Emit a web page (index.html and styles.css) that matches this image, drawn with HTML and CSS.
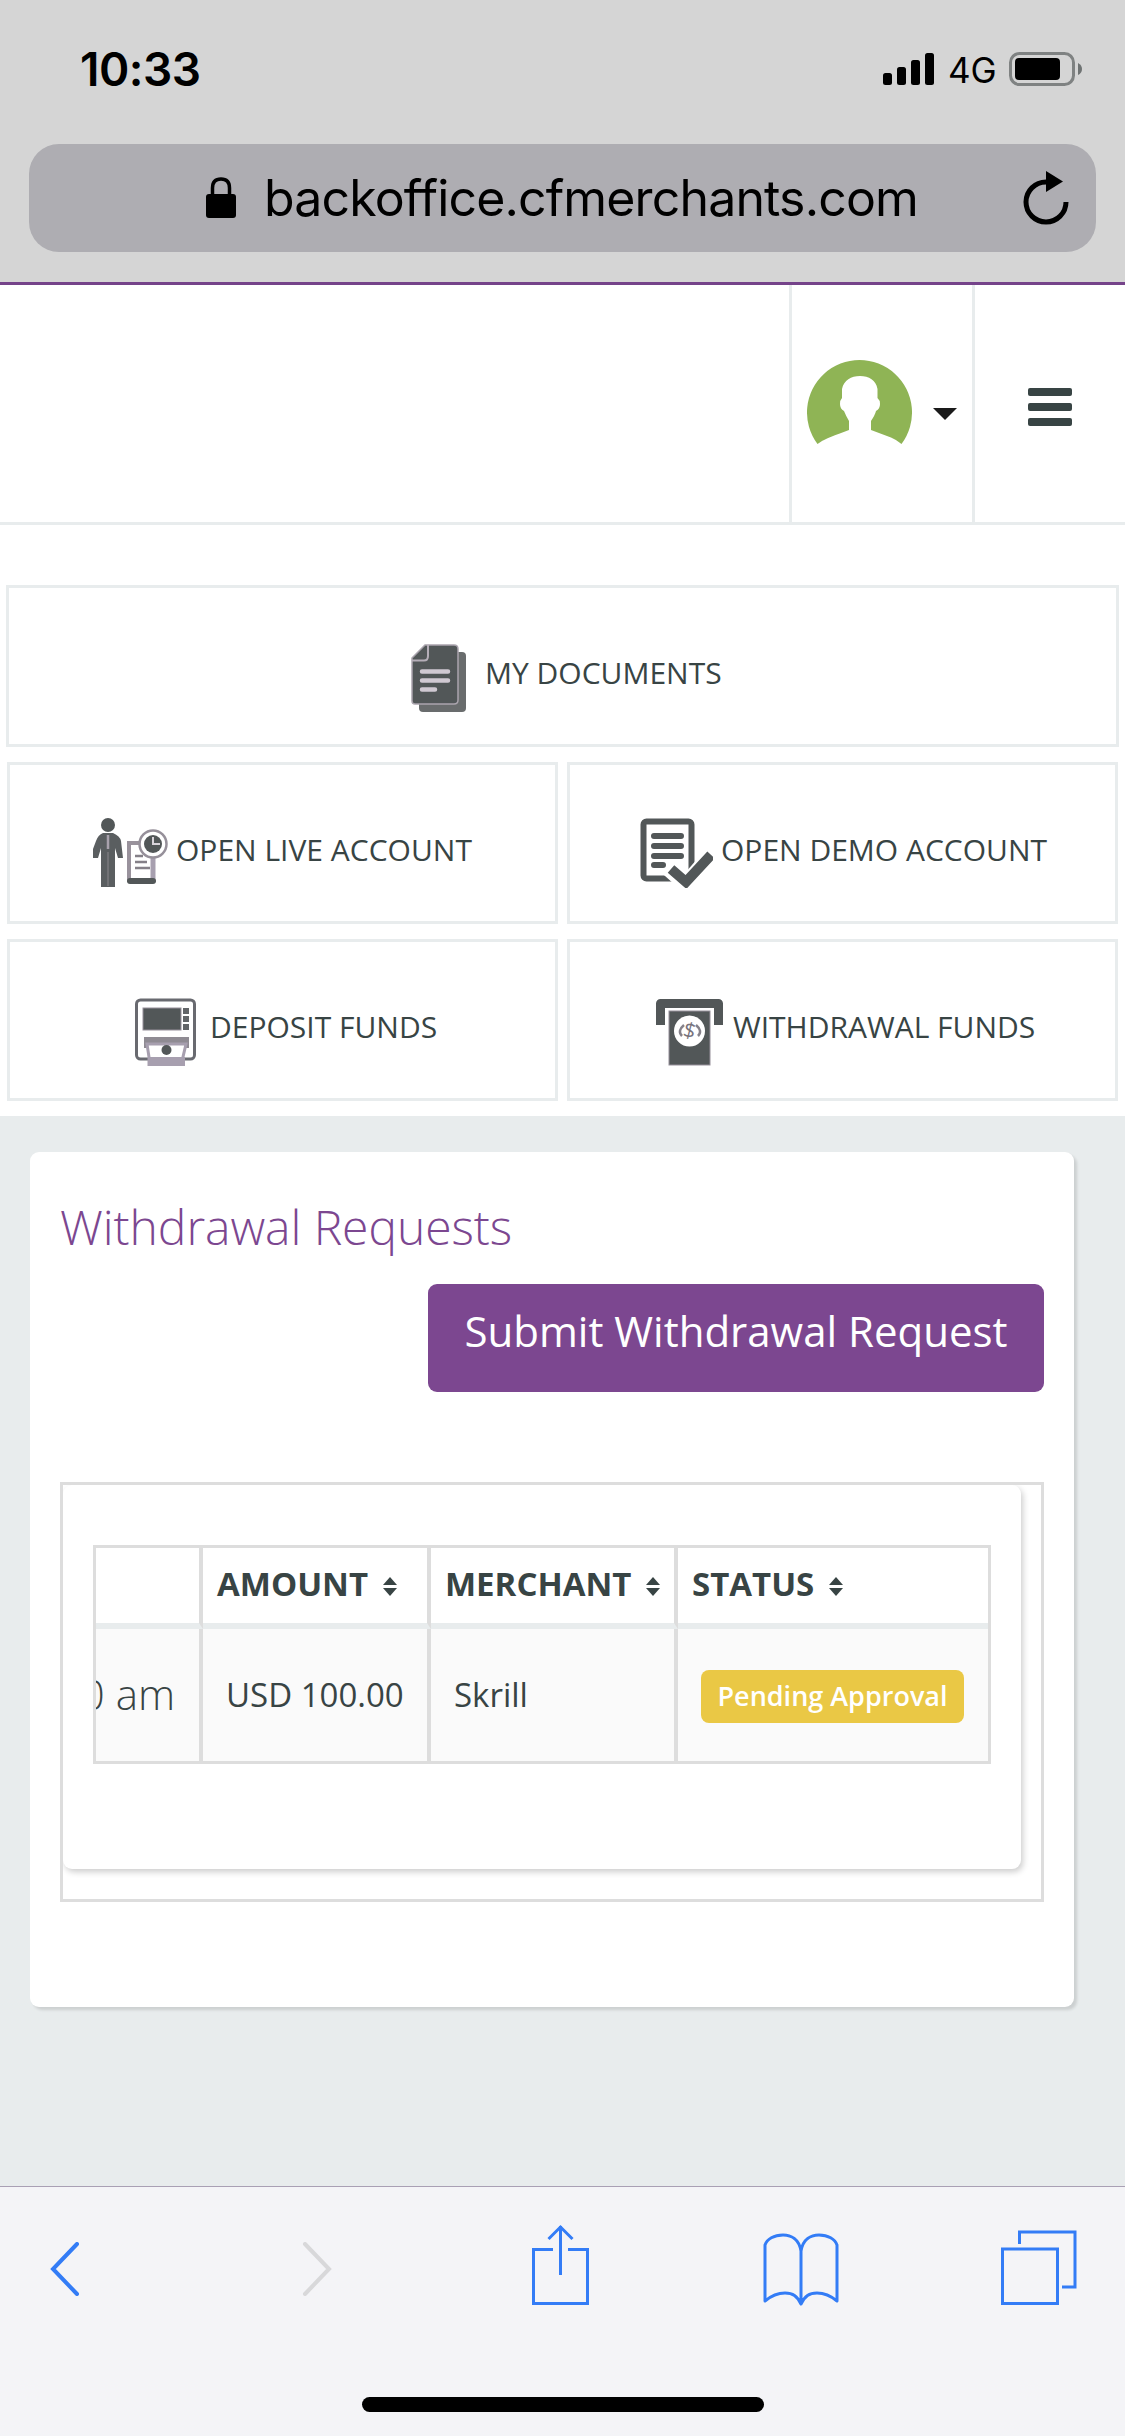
FILE: index.html
```html
<!DOCTYPE html>
<html lang="en">
<head>
    <meta charset="UTF-8">
    <meta name="viewport" content="width=device-width, initial-scale=1.0">
    <title>Withdrawal Requests</title>
    <link rel="stylesheet" href="styles.css">
</head>
<body>
    <div class="browser-top">
        <div class="status-bar">
            <span class="time">10:33</span>
            <div class="status-icons">
                <svg class="signal" viewBox="0 0 51 33" width="51" height="33">
                    <rect x="0" y="20" width="9" height="12" rx="2.5"/>
                    <rect x="14" y="14" width="9" height="18" rx="2.5"/>
                    <rect x="28" y="7" width="9" height="25" rx="2.5"/>
                    <rect x="42" y="0" width="9" height="32" rx="2.5"/>
                </svg>
                <span class="network">4G</span>
                <svg class="battery" viewBox="0 0 74 34" width="74" height="34">
                    <rect x="1.5" y="1.5" width="63" height="31" rx="9" fill="none" stroke="#7f8282" stroke-width="3"/>
                    <rect x="6" y="6" width="45" height="22" rx="4"/>
                    <path d="M69 11 Q73 13 73 17 Q73 21 69 23 Z" fill="#6f7373"/>
                </svg>
            </div>
        </div>
        <div class="address-bar">
            <svg class="lock" viewBox="0 0 30 42" width="30" height="42">
                <path d="M6.5 19 V11 Q6.5 2 15 2 Q23.5 2 23.5 11 V19" fill="none" stroke="#000" stroke-width="3.5"/>
                <rect x="0" y="17" width="30" height="24" rx="3"/>
            </svg>
            <span class="url">backoffice.cfmerchants.com</span>
            <svg class="reload" viewBox="0 0 48 54" width="48" height="54">
                <path d="M24 11 A20 20 0 1 0 44 31" fill="none" stroke="#000" stroke-width="5"/>
                <path d="M24 0 L41 10.5 L24 21 Z"/>
            </svg>
        </div>
    </div>

    <header class="header">
        <div class="user-menu">
            <svg viewBox="0 0 105 84" width="105" height="84">
                <path fill="#8fb455" d="M10.5 84 A52.5 52.5 0 1 1 94.5 84 Q90 80 84 77.5 L64 70 V61 Q68 55 69 51 Q73 49 73 44 Q73 40 70.5 38 V29 C69 20 62 16 53 16 C44 16 37 20 35 29 V38 Q33 40 33 44 Q33 49 37 51 Q39 56 42 61 V70 Q20 78 15 81 Z"/>
            </svg>
            <span class="caret"></span>
        </div>
        <div class="menu-toggle">
            <span></span>
            <span></span>
            <span></span>
        </div>
    </header>

    <nav class="quick-links">
        <a class="quick-link wide link-documents">
            <svg viewBox="0 0 55 68" width="55" height="68">
                <path fill="#696c6d" d="M47 8 H51 Q55 8 55 12 V64 Q55 68 51 68 H12 Q8 68 8 64 V60 Z"/>
                <path fill="#525758" stroke="#aaa4ad" stroke-width="1.5" d="M17 1 H43 Q47 1 47 5 V56 Q47 60 43 60 H4 Q1 60 1 57 V14 L14 1 Z"/>
                <path fill="none" stroke="#b5aeb8" stroke-width="2" d="M1 16.5 H13 Q17 16.5 17 12 V1"/>
                <path stroke="#d0c9d2" stroke-width="4.5" stroke-linecap="round" d="M11 27.5 H37 M11 36.5 H37 M11 45.5 H24"/>
            </svg>
            <span>MY DOCUMENTS</span>
        </a>
        <a class="quick-link link-live">
            <svg viewBox="0 0 75 70" width="75" height="70">
                <circle cx="15" cy="7" r="7" fill="#525758"/>
                <path fill="#5a5e60" d="M10 15 H20 Q27 18 28 23 L30 40 H25 L22 30 V69 H8 V30 L5 40 H0 V31 L3 23 Q5 17 10 15 Z"/>
                <path stroke="#a9a2ad" stroke-width="2.5" d="M15 17 V31"/>
                <path stroke="#8a878c" stroke-width="1" d="M15 34 V68"/>
                <path fill="none" stroke="#99929c" stroke-width="4" d="M46 25 H36 V64"/>
                <path stroke="#a79faf" stroke-width="5" d="M60 64 V38"/>
                <path stroke="#525758" stroke-width="6" stroke-linecap="round" d="M37 63 H60"/>
                <path stroke="#858088" stroke-width="2.5" d="M42 38 H50 M42 44 H54 M42 50 H57"/>
                <circle cx="60" cy="26" r="13.5" fill="#fff" stroke="#96909a" stroke-width="2.5"/>
                <circle cx="60" cy="26" r="9" fill="#525758"/>
                <path stroke="#d8d3da" stroke-width="2" fill="none" d="M60 19 V26 H67"/>
            </svg>
            <span>OPEN LIVE ACCOUNT</span>
        </a>
        <a class="quick-link link-demo">
            <svg viewBox="0 0 73 70" width="73" height="70">
                <rect x="3.5" y="3.5" width="48" height="57" rx="3" fill="none" stroke="#525758" stroke-width="6"/>
                <path stroke="#525758" stroke-width="6" stroke-linecap="round" d="M14 18 H41 M14 28 H41 M14 38 H41 M14 47 H23"/>
                <path fill="none" stroke="#fff" stroke-width="16" d="M27 49 L46 66 L73 35"/>
                <path fill="none" stroke="#525758" stroke-width="10" d="M31 51 L46 64 L71 37"/>
            </svg>
            <span>OPEN DEMO ACCOUNT</span>
        </a>
        <a class="quick-link link-deposit">
            <svg viewBox="0 0 62 68" width="62" height="68">
                <rect x="1.5" y="2" width="58" height="59" rx="4" fill="none" stroke="#696a70" stroke-width="3"/>
                <rect x="8" y="10" width="38" height="22" fill="#525758" stroke="#96909a" stroke-width="1"/>
                <path fill="#626568" d="M48 10 H54 V16 H48 Z M48 18 H54 V24 H48 Z M48 26 H54 V32 H48 Z"/>
                <rect x="13" y="44" width="37" height="15" fill="#fff"/>
                <path fill="#a79faf" d="M13 59 H50 V68 H13 Z"/>
                <path fill="#8f8b93" d="M9 39 H54 V50 H50 V45 H13 V50 H9 Z"/>
                <path fill="none" stroke="#a79faf" stroke-width="3" d="M14 68 V59 L12 46 H51 L48 59 V68"/>
                <circle cx="31.5" cy="52" r="5" fill="#525758"/>
            </svg>
            <span>DEPOSIT FUNDS</span>
        </a>
        <a class="quick-link link-withdraw">
            <svg viewBox="0 0 67 68" width="67" height="68">
                <path fill="none" stroke="#525758" stroke-width="9" stroke-linejoin="round" d="M4.5 27 V5.5 H62.5 V27"/>
                <rect x="10" y="12" width="47" height="56" fill="#fff"/>
                <rect x="13" y="13" width="41" height="54" fill="#525758" stroke="#96909a" stroke-width="1"/>
                <circle cx="33.5" cy="33" r="15.5" fill="#fff"/>
                <text class="coin" x="33.5" y="40" text-anchor="middle" transform="rotate(14 33.5 33)">$</text>
                <path fill="none" stroke="#85818a" stroke-width="2.5" d="M28 27 Q21 33 26 38 M40 27 Q47 33 42 38"/>
            </svg>
            <span>WITHDRAWAL FUNDS</span>
        </a>
    </nav>

    <main class="content">
        <section class="panel">
            <h1>Withdrawal Requests</h1>
            <div class="actions">
                <a class="submit-btn">Submit Withdrawal Request</a>
            </div>
            <div class="table-box">
                <div class="table-card">
                    <div class="table-scroll">
                        <table class="requests">
                            <thead>
                                <tr>
                                    <th class="col-date"></th>
                                    <th class="col-amount">AMOUNT <svg class="sort" viewBox="0 0 14 19" width="14" height="19"><path d="M0 8 L7 0 L14 8 Z M0 11 H14 L7 19 Z"/></svg></th>
                                    <th class="col-merchant">MERCHANT <svg class="sort" viewBox="0 0 14 19" width="14" height="19"><path d="M0 8 L7 0 L14 8 Z M0 11 H14 L7 19 Z"/></svg></th>
                                    <th class="col-status">STATUS <svg class="sort" viewBox="0 0 14 19" width="14" height="19"><path d="M0 8 L7 0 L14 8 Z M0 11 H14 L7 19 Z"/></svg></th>
                                </tr>
                            </thead>
                            <tbody>
                                <tr>
                                    <td class="date"><div>0 am</div></td>
                                    <td class="amount">USD 100.00</td>
                                    <td>Skrill</td>
                                    <td><span class="badge">Pending Approval</span></td>
                                </tr>
                            </tbody>
                        </table>
                    </div>
                </div>
            </div>
        </section>
    </main>

    <footer class="browser-bottom">
        <div class="toolbar">
            <svg class="chevron" viewBox="0 0 30 54" width="30" height="54">
                <path d="M27 2 L3 27 L27 52" stroke-width="4" stroke-linecap="round"/>
            </svg>
            <svg class="chevron disabled" viewBox="0 0 30 54" width="30" height="54">
                <path d="M3 2 L27 27 L3 52" stroke-width="4" stroke-linecap="round"/>
            </svg>
            <svg class="share" viewBox="0 0 58 82" width="58" height="82">
                <path d="M21 25.5 H1.5 V79.5 H55.5 V25.5 H36 M28.5 2 V51 M16.5 15 L28.5 3 L40.5 15" stroke-width="3"/>
            </svg>
            <svg class="book" viewBox="0 0 76 74" width="76" height="74">
                <path d="M38 18 C36 6 28 2 20 2 C11 2 4 6 2 12 V68 C8 63 15 60 22 60 C30 60 34 63 38 71 C42 63 46 60 54 60 C61 60 68 63 74 68 V12 C72 6 65 2 56 2 C48 2 40 6 38 18 V71" stroke-width="3" stroke-linejoin="round"/>
            </svg>
            <svg class="tabs" viewBox="0 0 76 76" width="76" height="76">
                <path d="M1.5 19 H56.5 V73.5 H1.5 Z M18.5 14 V2 H74 V57 H61" stroke-width="3"/>
            </svg>
        </div>
        <div class="home-indicator"></div>
    </footer>
</body>
</html>
```

FILE: styles.css
```css
* {
    box-sizing: border-box;
}

body {
    margin: 0;
    width: 1125px;
    height: 2436px;
    display: flex;
    flex-direction: column;
    overflow: hidden;
    background: #fff;
    color: #384444;
    font-family: 'Open Sans', 'Noto Sans', sans-serif;
}

svg {
    display: block;
    flex: none;
}

/* Browser top bar */
.browser-top {
    height: 285px;
    background: #d5d5d5;
    border-bottom: 3px solid #75438a;
    padding: 0 29px;
    font-family: Inter, 'Liberation Sans', sans-serif;
    color: #000;
}

.status-bar {
    height: 144px;
    padding: 0 13px 6px 51px;
    display: flex;
    align-items: center;
    justify-content: space-between;
}

.time {
    font-size: 46px;
    font-weight: 600;
    letter-spacing: -0.5px;
}

.status-icons {
    display: flex;
    align-items: center;
}

.network {
    width: 46px;
    margin: 2px 15px 0 13px;
    font-size: 35px;
    line-height: 36px;
}

.signal {
    margin-right: 1px;
}

.address-bar {
    height: 108px;
    padding: 0 26px 0 177px;
    display: flex;
    align-items: center;
    background: #aeadb2;
    border-radius: 30px;
}

.url {
    flex: 1;
    margin-left: 28px;
    font-size: 50px;
    line-height: 60px;
    letter-spacing: -0.85px;
    white-space: nowrap;
}

/* Header */
.header {
    height: 240px;
    display: flex;
    justify-content: flex-end;
    border-bottom: 3px solid #e8eced;
}

.user-menu {
    width: 186px;
    padding: 75px 0 0 15px;
    display: flex;
    gap: 21px;
    border-left: 3px solid #e8eced;
    border-right: 3px solid #e8eced;
}

.caret {
    width: 24px;
    height: 12px;
    margin-top: 48px;
    background: #1a1a1a;
    clip-path: polygon(0 0, 100% 0, 50% 100%);
}

.menu-toggle {
    width: 150px;
    padding: 103px 0 0 53px;
    display: flex;
    flex-direction: column;
    gap: 7px;
}

.menu-toggle span {
    width: 44px;
    height: 8px;
    border-radius: 2px;
    background: #384444;
}

/* Quick links */
.quick-links {
    padding: 60px 7px 15px;
    display: grid;
    grid-template-columns: 1fr 1fr;
    grid-auto-rows: 162px;
    gap: 15px 9px;
}

.quick-link {
    display: flex;
    align-items: flex-start;
    border: 3px solid #e8eced;
    font-size: 30px;
    line-height: 42px;
    white-space: nowrap;
}

.quick-link span {
    margin-top: 64px;
}

.wide {
    grid-column: 1 / -1;
    margin: 0 -1px;
}

.link-documents { padding-left: 402px; }
.link-documents svg { margin: 56px 19px 0 0; }
.link-live { padding-left: 83px; }
.link-live svg { margin: 53px 8px 0 0; }
.link-demo { padding-left: 70px; }
.link-demo svg { margin: 53px 8px 0 0; }
.link-deposit { padding-left: 125px; }
.link-deposit svg { margin: 56px 13px 0 0; }
.link-withdraw { padding-left: 86px; }
.link-withdraw svg { margin: 56px 10px 0 0; }

.coin {
    font-size: 21px;
    fill: #77737c;
}

/* Content */
.content {
    flex: 1;
    padding: 36px 51px 0 30px;
    background: #e8eced;
}

.panel {
    height: 855px;
    padding: 42px 30px 0;
    background: #fff;
    border-radius: 9px;
    box-shadow: 3px 3px 3px rgba(0, 0, 0, 0.12);
}

h1 {
    margin: 0;
    font-size: 48px;
    font-weight: 300;
    line-height: 66px;
    letter-spacing: -0.05px;
    color: #7c4790;
}

.actions {
    margin-top: 24px;
    display: flex;
    justify-content: flex-end;
}

.submit-btn {
    width: 616px;
    height: 108px;
    border-radius: 9px;
    background: #7c4790;
    color: #fff;
    font-size: 42px;
    line-height: 94px;
    text-align: center;
    white-space: nowrap;
}

.table-box {
    height: 420px;
    margin-top: 90px;
    padding-right: 20px;
    border: 3px solid #ddd;
}

.table-card {
    height: 384px;
    padding: 60px 30px 0;
    border-radius: 9px;
    box-shadow: 2px 3px 6px rgba(0, 0, 0, 0.2);
    clip-path: inset(0 -12px -12px 0);
}

.table-scroll {
    width: 898px;
    height: 219px;
    border: 3px solid #ddd;
    overflow: hidden;
}

.requests {
    width: 892px;
    table-layout: fixed;
    border-collapse: separate;
    border-spacing: 0;
}

.requests th,
.requests td {
    border-right: 4px solid #ddd;
    text-align: left;
    white-space: nowrap;
    font-size: 33px;
}

.requests th:last-child,
.requests td:last-child {
    border-right: 0;
}

.requests th {
    height: 81px;
    padding: 0 0 4px 14px;
    border-bottom: 6px solid #e8eced;
    line-height: 45px;
}

.requests td {
    height: 132px;
    padding: 0 0 2px 23px;
    background: #fafafa;
}

.col-date { width: 107px; }
.col-amount { width: 228px; }
.col-merchant { width: 247px; }

.sort {
    display: inline-block;
    margin-left: 6px;
    fill: #384444;
}

.requests .date {
    padding: 0 0 4px;
    font-size: 42px;
    font-weight: 300;
}

.date div {
    width: 79px;
    display: flex;
    justify-content: flex-end;
    overflow: hidden;
}

.badge {
    display: block;
    width: 263px;
    height: 53px;
    margin-top: 5px;
    border-radius: 8px;
    background: #eac845;
    color: #fff;
    font-size: 27px;
    font-weight: 600;
    line-height: 52px;
    text-align: center;
}

/* Browser bottom bar */
.browser-bottom {
    height: 250px;
    border-top: 1px solid #a9a0b4;
    background: #f4f4f7;
}

.toolbar {
    height: 210px;
    padding: 37px 0 0 50px;
    display: grid;
    grid-template-columns: 252px 230px 231px 238px 76px;
    align-items: start;
}

.toolbar svg {
    fill: none;
    stroke: #337cf6;
}

.toolbar .chevron {
    margin-top: 18px;
}

.toolbar .book {
    margin-top: 9px;
}

.toolbar .tabs {
    margin-top: 6px;
}

.toolbar .disabled {
    stroke: #d8d8da;
}

.home-indicator {
    width: 402px;
    height: 15px;
    margin: 0 auto;
    border-radius: 8px;
    background: #000;
}
```
